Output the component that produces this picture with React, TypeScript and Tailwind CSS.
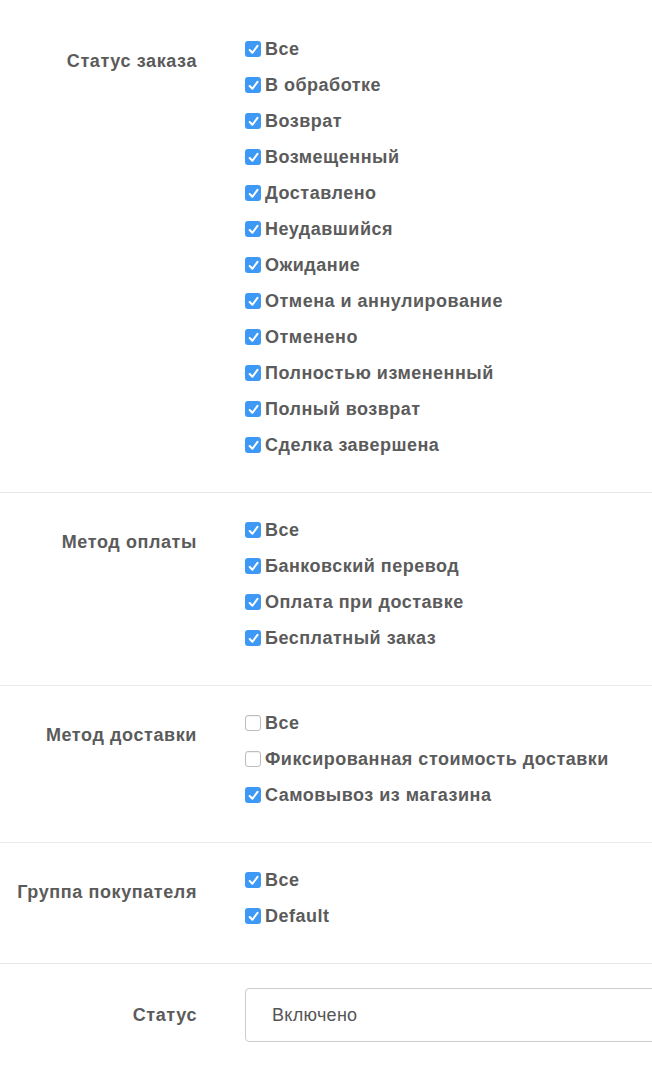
const sections: { label: string; items: [string, boolean][] }[] = [
	{
		label: "Статус заказа",
		items: [
			["Все", true],
			["В обработке", true],
			["Возврат", true],
			["Возмещенный", true],
			["Доставлено", true],
			["Неудавшийся", true],
			["Ожидание", true],
			["Отмена и аннулирование", true],
			["Отменено", true],
			["Полностью измененный", true],
			["Полный возврат", true],
			["Сделка завершена", true],
		],
	},
	{
		label: "Метод оплаты",
		items: [
			["Все", true],
			["Банковский перевод", true],
			["Оплата при доставке", true],
			["Бесплатный заказ", true],
		],
	},
	{
		label: "Метод доставки",
		items: [
			["Все", false],
			["Фиксированная стоимость доставки", false],
			["Самовывоз из магазина", true],
		],
	},
	{
		label: "Группа покупателя",
		items: [
			["Все", true],
			["Default", true],
		],
	},
];

function Box({ checked }: { checked: boolean }) {
	if (!checked) {
		return (
			<span className="w-4 h-4 shrink-0 rounded-[3px] border border-[#bdbdbd] bg-white shadow-[inset_0_1px_1px_rgba(0,0,0,0.06)]" />
		);
	}
	return (
		<span className="w-4 h-4 shrink-0 rounded-[3px] bg-[#3d99f5] flex items-center justify-center">
			<svg width="13" height="13" viewBox="0 0 12 12" fill="none">
				<path
					d="M2.5 6.5 L5 9 L9.7 2.7"
					stroke="white"
					strokeWidth="1.9"
					strokeLinecap="round"
					strokeLinejoin="round"
				/>
			</svg>
		</span>
	);
}

export default function App() {
	return (
		<div
			className="w-[652px] min-h-[1078px] bg-white pt-[12px] text-[#5b5b5b] overflow-hidden"
			style={{ fontFamily: '"Liberation Sans", Arial, sans-serif' }}
		>
			{sections.map(section => (
				<div
					key={section.label}
					className="flex border-b border-[#e9e9e9] pt-[19px] pb-[29px]"
				>
					<div className="w-[197px] shrink-0 text-right font-bold text-[18px] tracking-[0.6px] leading-5 pt-[20px]">
						{section.label}
					</div>
					<div className="ml-[48px] flex flex-col">
						{section.items.map(([name, checked]) => (
							<div key={name} className="h-9 flex items-center gap-1">
								<Box checked={checked} />
								<span className="font-bold text-[18px] tracking-[0.5px] leading-5 whitespace-nowrap">
									{name}
								</span>
							</div>
						))}
					</div>
				</div>
			))}
			<div className="flex items-center pt-[24px]">
				<div className="w-[197px] shrink-0 text-right font-bold text-[18px] tracking-[0.6px] leading-5">
					Статус
				</div>
				<div className="ml-[48px] flex-1 h-[54px] -mr-4 border border-[#cccccc] rounded-[4px] flex items-center pl-[26px] text-[18px] tracking-[0.3px] text-[#555]">
					Включено
				</div>
			</div>
		</div>
	);
}
